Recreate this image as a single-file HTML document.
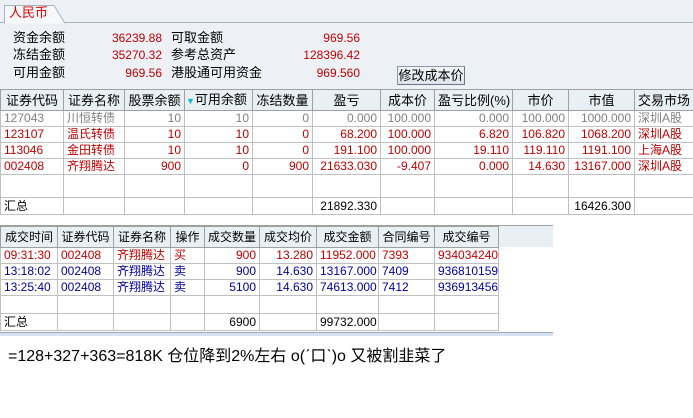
<!DOCTYPE html>
<html><head><meta charset="utf-8"><style>
*{margin:0;padding:0;box-sizing:border-box}
body{width:693px;height:418px;background:#fff;font-family:"Liberation Sans","Noto Sans CJK SC",sans-serif;font-size:12px;position:relative;overflow:hidden;color:#000}
.a{position:absolute;white-space:nowrap;line-height:16px}
.r{text-align:right}
.red{color:#c00000}
table{position:absolute;border-collapse:collapse;table-layout:fixed;font-size:12px}
td{border:1px solid #c0c0c0;height:16px;padding:0 3px;white-space:nowrap;overflow:hidden;line-height:15px}
tr.h td{height:21px;background:#e9f0f4;border-color:#a0a0a0;font-size:13px;text-align:center}
#t2 tr.h td{font-size:12px;padding:0 1px}
.n{text-align:right}
.g{color:#808080}.rd{color:#c00000}.bl{color:#0000a0}
</style></head><body>
<div style="position:absolute;left:0;top:0;width:693px;height:89px;background:#edf1f5"></div>
<div style="position:absolute;left:0;top:22px;width:693px;height:1px;background:#a8b4c0"></div>
<svg style="position:absolute;left:4px;top:4px" width="62" height="20"><path d="M0.5 19.5 V1.5 H50 L61 19.5" fill="#f6f8fa" stroke="#a8b4c0"/></svg>
<div class="a" style="left:9px;top:5px;color:#e00000;font-size:13px">人民币</div>
<div class="a" style="left:13px;top:30px;font-size:13px">资金余额</div>
<div class="a" style="left:13px;top:47px;font-size:13px">冻结金额</div>
<div class="a" style="left:13px;top:65px;font-size:13px">可用金额</div>
<div class="a r red" style="left:100px;width:62px;top:30px">36239.88</div>
<div class="a r red" style="left:100px;width:62px;top:47px">35270.32</div>
<div class="a r red" style="left:100px;width:62px;top:65px">969.56</div>
<div class="a" style="left:171px;top:30px;font-size:13px">可取金额</div>
<div class="a" style="left:171px;top:47px;font-size:13px">参考总资产</div>
<div class="a" style="left:171px;top:65px;font-size:13px">港股通可用资金</div>
<div class="a r red" style="left:290px;width:70px;top:30px">969.56</div>
<div class="a r red" style="left:290px;width:70px;top:47px">128396.42</div>
<div class="a r red" style="left:290px;width:70px;top:65px">969.560</div>
<div class="a" style="left:397px;top:66px;width:68px;height:19px;border:1px solid #8a98a8;border-right-color:#6a7888;border-bottom-color:#6a7888;background:linear-gradient(#f2f6fa,#dde5ee);text-align:center;line-height:17px;font-size:13px">修改成本价</div>

<table style="left:0;top:89px;width:693px">
<colgroup><col style="width:63px"><col style="width:61px"><col style="width:60px"><col style="width:68px"><col style="width:60px"><col style="width:68px"><col style="width:54px"><col style="width:78px"><col style="width:56px"><col style="width:66px"><col style="width:59px"></colgroup>
<tr class="h"><td>证券代码</td><td>证券名称</td><td>股票余额</td><td style="text-align:left;padding:0 1px"><span style="color:#00c0d0;font-size:9px">▼</span>可用余额</td><td>冻结数量</td><td>盈亏</td><td>成本价</td><td>盈亏比例(%)</td><td>市价</td><td>市值</td><td style="text-align:left">交易市场</td></tr>
<tr class="g"><td>127043</td><td>川恒转债</td><td class="n">10</td><td class="n">10</td><td class="n">0</td><td class="n">0.000</td><td class="n">100.000</td><td class="n">0.000</td><td class="n">100.000</td><td class="n">1000.000</td><td>深圳A股</td></tr>
<tr class="rd"><td>123107</td><td>温氏转债</td><td class="n">10</td><td class="n">10</td><td class="n">0</td><td class="n">68.200</td><td class="n">100.000</td><td class="n">6.820</td><td class="n">106.820</td><td class="n">1068.200</td><td>深圳A股</td></tr>
<tr class="rd"><td>113046</td><td>金田转债</td><td class="n">10</td><td class="n">10</td><td class="n">0</td><td class="n">191.100</td><td class="n">100.000</td><td class="n">19.110</td><td class="n">119.110</td><td class="n">1191.100</td><td>上海A股</td></tr>
<tr class="rd"><td>002408</td><td>齐翔腾达</td><td class="n">900</td><td class="n">0</td><td class="n">900</td><td class="n">21633.030</td><td class="n">-9.407</td><td class="n">0.000</td><td class="n">14.630</td><td class="n">13167.000</td><td>深圳A股</td></tr>
<tr><td style="height:23px"></td><td></td><td></td><td></td><td></td><td></td><td></td><td></td><td></td><td></td><td></td></tr>
<tr><td style="height:17px">汇总</td><td></td><td></td><td></td><td></td><td class="n">21892.330</td><td></td><td></td><td></td><td class="n">16426.300</td><td></td></tr>
</table>

<div style="position:absolute;left:0;top:225px;width:553px;height:1px;background:#a0a0a0"></div>
<div style="position:absolute;left:0;top:226px;width:553px;height:21px;background:#e9f0f4"></div>
<table id="t2" style="left:0;top:226px;width:498px">
<colgroup><col style="width:57px"><col style="width:56px"><col style="width:57px"><col style="width:34px"><col style="width:55px"><col style="width:57px"><col style="width:62px"><col style="width:56px"><col style="width:64px"></colgroup>
<tr class="h"><td>成交时间</td><td>证券代码</td><td>证券名称</td><td>操作</td><td>成交数量</td><td>成交均价</td><td>成交金额</td><td>合同编号</td><td>成交编号</td></tr>
<tr class="rd"><td>09:31:30</td><td>002408</td><td>齐翔腾达</td><td>买</td><td class="n">900</td><td class="n">13.280</td><td class="n">11952.000</td><td>7393</td><td>934034240</td></tr>
<tr class="bl"><td>13:18:02</td><td>002408</td><td>齐翔腾达</td><td>卖</td><td class="n">900</td><td class="n">14.630</td><td class="n">13167.000</td><td>7409</td><td>936810159</td></tr>
<tr class="bl"><td>13:25:40</td><td>002408</td><td>齐翔腾达</td><td>卖</td><td class="n">5100</td><td class="n">14.630</td><td class="n">74613.000</td><td>7412</td><td>936913456</td></tr>
<tr><td style="height:18px"></td><td></td><td></td><td></td><td></td><td></td><td></td><td></td><td></td></tr>
<tr><td style="height:17px">汇总</td><td></td><td></td><td></td><td class="n">6900</td><td></td><td class="n">99732.000</td><td></td><td></td></tr>
</table>
<div style="position:absolute;left:0;top:332px;width:553px;height:1px;background:#a0a8b0"></div>
<div style="position:absolute;left:0;top:333px;width:553px;height:3px;background:#d4e2f2"></div>
<div class="a" style="left:8px;top:347px;font-size:16px;line-height:19px">=128+327+363=818K 仓位降到2%左右 o(ˊ口ˋ)o 又被割韭菜了</div>
</body></html>
